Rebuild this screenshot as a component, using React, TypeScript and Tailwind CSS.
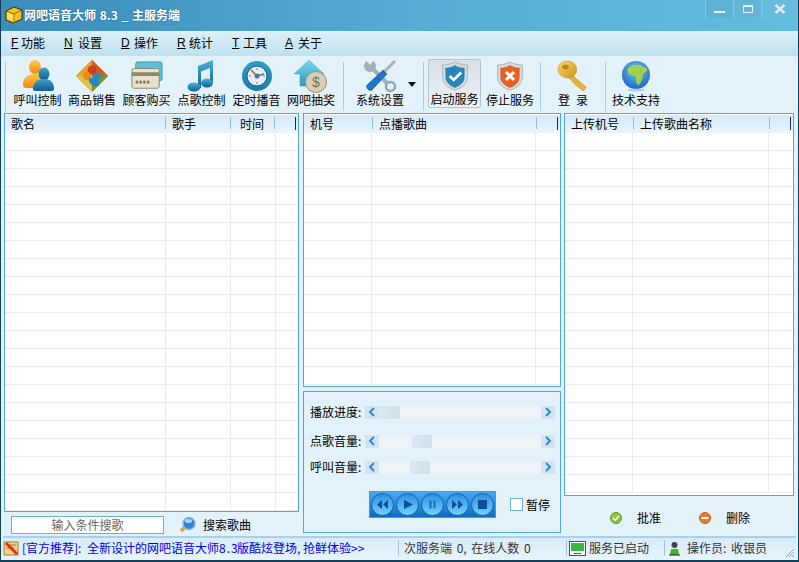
import React from "react";

const Ico = ({ children, className = "w-[34px] h-[34px]" }: { children: React.ReactNode; className?: string }) => (
  <svg viewBox="0 0 34 34" className={className}>{children}</svg>
);

const Users = () => (
  <Ico>
    <defs>
      <linearGradient id="uo" x1="0" y1="0" x2="0" y2="1"><stop offset="0" stopColor="#ffc94d" /><stop offset="1" stopColor="#ee8a10" /></linearGradient>
      <linearGradient id="ub" x1="0" y1="0" x2="0" y2="1"><stop offset="0" stopColor="#3aa0d0" /><stop offset="1" stopColor="#115f8f" /></linearGradient>
    </defs>
    <ellipse cx="14" cy="8" rx="6" ry="7" fill="url(#uo)" />
    <path d="M2 26c0-7 4-11 12-11 5 0 8 2 9 5l-4 9H6c-3 0-4-1-4-3z" fill="url(#uo)" />
    <ellipse cx="23" cy="15" rx="5.500" ry="6.500" fill="url(#ub)" />
    <path d="M12 30c0-6 4-10 11-10s10 4 10 10c0 1-1 2-2 2H14c-1 0-2-1-2-2z" fill="url(#ub)" />
  </Ico>
);
const Puzzle = () => (
  <Ico>
    <path d="M17 1L33 17 17 33 1 17z" fill="#7fa040" />
    <path d="M17 1L17 17 1 17z" fill="#f0a020" />
    <path d="M17 1L33 17 17 17z" fill="#d85a20" />
    <path d="M17 17H33L17 33z" fill="#6f9a3c" />
    <path d="M1 17H17V33z" fill="#e8c040" />
    <circle cx="17" cy="11" r="4.500" fill="#c8401c" />
    <circle cx="12" cy="17" r="4" fill="#e88a18" />
    <path d="M14 19h10v8h-6l-4-4z" fill="#2a86c0" />
    <circle cx="22" cy="17" r="3.500" fill="#2a86c0" />
  </Ico>
);
const Card = () => (
  <Ico className="w-[32px] h-[32px]">
    <rect x="5" y="2" width="28" height="20" rx="2" fill="#5cc0d8" stroke="#3a9cb8" />
    <rect x="1" y="9" width="29" height="21" rx="2" fill="#e6e0cc" stroke="#8a8470" />
    <rect x="1" y="13" width="29" height="4" fill="#8e8a70" />
    <rect x="5" y="22" width="2.500" height="3" fill="#77735e" />
    <rect x="9" y="22" width="2.500" height="3" fill="#77735e" />
    <rect x="13" y="22" width="2.500" height="3" fill="#77735e" />
    <rect x="17" y="22" width="2.500" height="3" fill="#77735e" />
  </Ico>
);
const Music = () => (
  <Ico>
    <defs><linearGradient id="mu" x1="0" y1="0" x2="0" y2="1"><stop offset="0" stopColor="#4ab4dc" /><stop offset="1" stopColor="#0f5f88" /></linearGradient></defs>
    <path d="M13 7L28 1V24h-3V9L16 12.500V29h-3z" fill="url(#mu)" />
    <ellipse cx="9" cy="28" rx="6.500" ry="4.500" fill="url(#mu)" />
    <ellipse cx="22" cy="24" rx="6" ry="4.500" fill="url(#mu)" />
  </Ico>
);
const Clock = () => (
  <Ico>
    <defs><linearGradient id="cl" x1="0" y1="0" x2="0" y2="1"><stop offset="0" stopColor="#2f9fcb" /><stop offset="1" stopColor="#1a7aa8" /></linearGradient></defs>
    <circle cx="17" cy="17" r="15" fill="url(#cl)" />
    <circle cx="17" cy="17" r="10" fill="#e6edf0" stroke="#125f88" />
    <path d="M17 9v2M17 23v2M9 17h2M23 17h2" stroke="#6d8a9c" />
    <path d="M17 17L11 11" stroke="#d05020" strokeWidth="1.500" />
    <path d="M17 17L24 15" stroke="#4a7a98" strokeWidth="1.500" />
    <circle cx="17" cy="17" r="2.500" fill="#4a7a98" />
  </Ico>
);
const HomeCoin = () => (
  <Ico>
    <defs><linearGradient id="hc" x1="0" y1="0" x2="0" y2="1"><stop offset="0" stopColor="#7cd8ec" /><stop offset="1" stopColor="#2a9cc4" /></linearGradient></defs>
    <path d="M15 1L30 15H25V27H6V15H0z" fill="url(#hc)" stroke="#3b9fc4" strokeWidth="0.500" />
    <circle cx="22" cy="23" r="10.500" fill="#d8d0b4" stroke="#9a9276" />
    <text x="22" y="28" textAnchor="middle" fontSize="14" fill="#7a7258" fontFamily="Liberation Sans">$</text>
  </Ico>
);
const Tools = () => (
  <Ico>
    <circle cx="7" cy="7" r="6" fill="#a4afb7" />
    <path d="M2 0l5 6 5-6z" fill="#e3f1f9" />
    <path d="M9 9L26 26" stroke="#a4afb7" strokeWidth="4" />
    <circle cx="27.500" cy="27.500" r="4.500" fill="#e3f1f9" stroke="#9aa4ac" strokeWidth="2.500" />
    <path d="M32 2L20 14" stroke="#a8b2ba" strokeWidth="3" />
    <path d="M20 11l4 4L9 31c-2 2-7-2-5-5z" fill="#1f74c8" stroke="#14528f" strokeWidth="0.500" />
  </Ico>
);
const Shield = ({ color, dark, x }: { color: string; dark: string; x?: boolean }) => (
  <Ico className="w-[30px] h-[32px]">
    <path d="M17 1c4 2.500 9 3.500 14 3.500V18c0 8-7 13-14 15C10 31 3 26 3 18V4.500C8 4.500 13 3.500 17 1z" fill="#d8dcdc" stroke="#a6adb0" />
    <path d="M17 5c3 2 7 3 10.500 3v10c0 6-5 10-10.500 12C11.500 28 6.500 24 6.500 18V8C10 8 14 7 17 5z" fill={color} stroke={dark} strokeWidth="0.500" />
    {x ? (
      <path d="M12.500 12.500L21.500 21.500M21.500 12.500L12.500 21.500" stroke="#fff" strokeWidth="3.500" />
    ) : (
      <path d="M11 17l4.500 4.500L24 13" stroke="#fff" strokeWidth="3" fill="none" />
    )}
  </Ico>
);
const Key = () => (
  <Ico className="w-[32px] h-[32px]">
    <defs><linearGradient id="ky" x1="0" y1="0" x2="1" y2="1"><stop offset="0" stopColor="#fbd868" /><stop offset="1" stopColor="#d09418" /></linearGradient></defs>
    <path d="M15 15L31 29 28 33 24 30 22 28 20 27 12 18z" fill="#e8b438" stroke="#b88420" strokeWidth="0.500" />
    <ellipse cx="11" cy="10" rx="10" ry="9" fill="url(#ky)" stroke="#b88420" strokeWidth="0.500" />
    <ellipse cx="9" cy="7.500" rx="3.500" ry="2.500" fill="#b88420" />
  </Ico>
);
const Globe = () => (
  <Ico>
    <defs><radialGradient id="gl" cx="0.500" cy="0.350" r="0.700"><stop offset="0" stopColor="#6cc4f4" /><stop offset="1" stopColor="#1a62c0" /></radialGradient></defs>
    <circle cx="17" cy="16" r="14" fill="url(#gl)" />
    <path d="M9 9c3-3 8-4 12-3l3 2c3 0 5 2 4 4l-4 3-1 6-3 5c-2 0-3-3-3-6l-1-3c-3 0-6-1-7-3 0-2-1-4 0-5z" fill="#a4d050" />
    <ellipse cx="17" cy="31" rx="9" ry="1.500" fill="#9cb8c8" opacity="0.600" />
  </Ico>
);

const Sep = ({ className = "" }: { className?: string }) => <div className={`w-px h-[49px] bg-[#a9cde3] ${className}`} />;

const Tool = ({ label, children, className = "w-[54px]" }: { label: string; children: React.ReactNode; className?: string }) => (
  <div className={`flex flex-col items-center shrink-0 ${className}`}>
    <div className="h-[34px] flex items-center justify-center">{children}</div>
    <div className="text-[12px] leading-[16px] -mt-[1px] whitespace-nowrap text-black">{label}</div>
  </div>
);

const Menu = ({ k, label, className, keyW }: { k: string; label: string; className: string; keyW: string }) => (
  <div className={`text-[12px] leading-[16px] text-black flex shrink-0 ${className}`}>
    <span className={`underline font-['Liberation_Sans'] ${keyW}`}>{k}</span>
    <span>{label}</span>
  </div>
);

const HeaderCell = ({ label, className, pad = "pl-[6px]" }: { label: string; className: string; pad?: string }) => (
  <div className={`h-full flex items-center shrink-0 relative ${pad} ${className}`}>
    <span className="text-[12px] whitespace-nowrap text-black">{label}</span>
    <span className="absolute right-0 top-[2px] h-[12px] w-px bg-[#8fc0e0]" />
  </div>
);

const rowIndexes = (n: number) => Array.from({ length: n }, (_, i) => i);

function Table({ headers, cols, rows, className }: { headers: { label: string; cls: string; pad?: string }[]; cols: string[]; rows: number; className: string }) {
  return (
    <div className={`border border-[#4fa9de] bg-white overflow-hidden flex flex-col ${className}`}>
      <div className="h-[18px] mt-[1px] shrink-0 flex bg-gradient-to-b from-[#d5e9f9] to-[#ebf5fc] relative">
        {headers.map((h) => (
          <HeaderCell key={h.label} label={h.label} className={h.cls} pad={h.pad} />
        ))}
        <span className="absolute right-[2px] top-[2px] h-[13px] w-px bg-[#1c2a44]" />
      </div>
      <div className="flex-1 overflow-hidden">
        {rowIndexes(rows).map((r) => (
          <div key={r} className="flex h-[18px] border-b border-[#ececec]">
            {cols.map((c, i) => (
              <div key={i} className={`h-full shrink-0 border-r border-[#ececec] ${c}`} />
            ))}
          </div>
        ))}
      </div>
    </div>
  );
}

const ScrollRow = ({ label, thumb, className }: { label: string; thumb: string; className: string }) => (
  <div className={`flex items-center h-[14px] ${className}`}>
    <span className="w-[55px] shrink-0 text-[12px] whitespace-nowrap text-black">{label}</span>
    <div className="w-[190px] h-[13px] flex bg-[#edf3f7]">
      <div className="w-[14px] h-full bg-[#d4e4ef] flex items-center justify-center">
        <svg width="8" height="10" viewBox="0 0 8 10"><path d="M6 1L2 5l4 4" fill="none" stroke="#2f86d8" strokeWidth="2" /></svg>
      </div>
      <div className={`h-full bg-gradient-to-r from-[#dae8f1] to-[#cfe0ec] ${thumb}`} />
      <div className="flex-1" />
      <div className="w-[14px] h-full bg-[#d4e4ef] flex items-center justify-center">
        <svg width="8" height="10" viewBox="0 0 8 10"><path d="M2 1l4 4-4 4" fill="none" stroke="#2f86d8" strokeWidth="2" /></svg>
      </div>
    </div>
  </div>
);

const RoundBtn = ({ children }: { children: React.ReactNode }) => (
  <div className="w-[23px] h-[23px] rounded-full shrink-0 bg-gradient-to-b from-[#2a90e0] to-[#74d0fc] border border-[#1265b0] flex items-center justify-center">
    <svg width="13" height="11" viewBox="0 0 13 11" fill="#0a4f98">{children}</svg>
  </div>
);

export default function App() {
  return (
    <div className="w-[799px] h-[562px] flex flex-col overflow-hidden bg-[#e3f1f9] font-['Noto_Sans_CJK_SC','Liberation_Sans',sans-serif] border-l border-r border-b-2 border-[#14405c]">
      <div className="h-[31px] shrink-0 flex items-center bg-gradient-to-r from-[#3a8cba] via-[#55abd3] to-[#64bddf] relative pl-[4px] pb-[1px]">
        <svg width="18" height="18" viewBox="0 0 18 18" className="shrink-0">
          <path d="M9 1L17 4V13L8 17 1 14V5z" fill="#f7c21a" stroke="#3a2a10" />
          <path d="M1 5L9 8 17 4" fill="none" stroke="#3a2a10" strokeWidth="0.600" />
          <path d="M9 8V17" stroke="#b07a10" />
          <path d="M2 6L8 8.500V15L2 13z" fill="#fde24c" />
        </svg>
        <span className="ml-[1px] text-[12px] font-bold text-white whitespace-nowrap [word-spacing:1px] [text-shadow:0_0_2px_#1a5a80]">网吧语音大师 8.3 _ 主服务端</span>
        <div className="absolute right-0 top-0 h-[18px] flex">
          <div className="w-[28px] h-full border-l border-[#8ac4dc] bg-[#5fb2d4] flex items-center justify-center pt-[6px]"><div className="w-[11px] h-[2px] bg-[#e8f2f8]" /></div>
          <div className="w-[28px] h-full border-l border-[#8ac4dc] bg-[#63b6d8] flex items-center justify-center"><div className="w-[10px] h-[8px] border border-t-2 border-[#e8f2f8]" /></div>
          <div className="w-[37px] h-full border-l border-[#8ac4dc] bg-[#6abcdc] flex items-center justify-center">
            <svg width="12" height="10" viewBox="0 0 12 10"><path d="M1.500 1L10.500 9M10.500 1L1.500 9" stroke="#dfeaf0" strokeWidth="2.400" /></svg>
          </div>
        </div>
      </div>

      <div className="h-[25px] shrink-0 flex items-center pl-[10px] pb-[2px] bg-gradient-to-b from-[#ddf0f8] to-[#bfe1f0]">
        <Menu k="F" label="功能" className="w-[53px]" keyW="w-[10px]" />
        <Menu k="N" label="设置" className="w-[57px]" keyW="w-[14px]" />
        <Menu k="D" label="操作" className="w-[56px]" keyW="w-[13px]" />
        <Menu k="R" label="统计" className="w-[55px]" keyW="w-[12px]" />
        <Menu k="T" label="工具" className="w-[53px]" keyW="w-[11px]" />
        <Menu k="A" label="关于" className="w-[50px]" keyW="w-[13px]" />
      </div>

      <div className="h-[57px] shrink-0 flex items-start pt-[3px] pl-[4px]">
        <Sep className="mr-[4px] mt-[3px]" />
        <Tool label="呼叫控制" className="w-[55px]"><Users /></Tool>
        <Tool label="商品销售"><Puzzle /></Tool>
        <Tool label="顾客购买" className="w-[55px]"><Card /></Tool>
        <Tool label="点歌控制" className="w-[55px]"><Music /></Tool>
        <Tool label="定时播音" className="w-[55px]"><Clock /></Tool>
        <Tool label="网吧抽奖"><HomeCoin /></Tool>
        <Sep className="ml-[5px] mt-[3px]" />
        <Tool label="系统设置" className="w-[54px] ml-[9px]"><Tools /></Tool>
        <svg width="8" height="5" viewBox="0 0 8 5" className="ml-[1px] mt-[23px] shrink-0"><path d="M0 0h8L4 5z" fill="#111" /></svg>
        <Sep className="ml-[7px] mt-[3px]" />
        <div className="ml-[4px] w-[53px] h-[49px] shrink-0 rounded-[2px] border border-[#b6c4cc] bg-gradient-to-b from-[#d5e0e6] to-[#ecf2f5] flex justify-center">
          <Tool label="启动服务" className="w-[50px]"><Shield color="#2487b6" dark="#156890" /></Tool>
        </div>
        <Tool label="停止服务" className="w-[54px] ml-[2px]"><Shield color="#e5621f" dark="#b8400f" x /></Tool>
        <Sep className="ml-[3px] mt-[3px]" />
        <Tool label={"登\u2002录"} className="w-[54px] ml-[5px]"><Key /></Tool>
        <Sep className="ml-[5px] mt-[3px]" />
        <Tool label="技术支持" className="w-[54px] ml-[3px]"><Globe /></Tool>
      </div>

      <div className="flex-1 flex min-h-0 pl-[3px]">
        <div className="w-[295px] shrink-0 flex flex-col">
          <Table
            className="h-[399px] shrink-0"
            headers={[
              { label: "歌名", cls: "w-[161px]" },
              { label: "歌手", cls: "w-[65px]" },
              { label: "时间", cls: "w-[44px]", pad: "pl-[9px]" },
            ]}
            cols={["w-[161px]", "w-[65px]", "w-[45px]"]}
            rows={21}
          />
          <div className="flex items-center mt-[4px] pl-[7px]">
            <div className="w-[153px] h-[18px] border border-[#6faed6] bg-white text-center text-[12px] leading-[15px] text-[#666]">输入条件搜歌</div>
            <svg width="18" height="18" viewBox="0 0 18 18" className="ml-[15px] shrink-0">
              <path d="M6 11L2 15" stroke="#e8a020" strokeWidth="3.500" />
              <circle cx="10" cy="7.500" r="6" fill="#2b86e0" stroke="#8fb4d0" strokeWidth="1.500" />
              <ellipse cx="9.500" cy="5" rx="3.500" ry="2" fill="#a8d8f8" />
            </svg>
            <span className="ml-[6px] text-[12px] text-black whitespace-nowrap">搜索歌曲</span>
          </div>
        </div>

        <div className="w-[258px] ml-[4px] shrink-0 flex flex-col">
          <Table
            className="h-[274px] shrink-0"
            headers={[
              { label: "机号", cls: "w-[69px]" },
              { label: "点播歌曲", cls: "w-[164px]" },
            ]}
            cols={["w-[68px]", "w-[164px]"]}
            rows={14}
          />
          <div className="h-[142px] mt-[4px] border border-[#4fa9de] pl-[6px] pt-[13px]">
            <ScrollRow label="播放进度:" thumb="w-[21px]" className="" />
            <ScrollRow label="点歌音量:" thumb="w-[20px] ml-[33px]" className="mt-[15px]" />
            <ScrollRow label="呼叫音量:" thumb="w-[20px] ml-[31px]" className="mt-[12px]" />
            <div className="flex items-center mt-[17px] ml-[59px]">
              <div className="w-[127px] h-[27px] flex items-center justify-center gap-[2px] bg-gradient-to-b from-[#46aaf0] to-[#0b6cc0] border border-[#3f9ce0]">
                <RoundBtn><path d="M6 1v9L1 5.500zM12 1v9L7 5.500z" /></RoundBtn>
                <RoundBtn><path d="M3 1l9 4.500L3 10z" /></RoundBtn>
                <RoundBtn><path d="M3.500 1.500h2v8h-2zM7.500 1.500h2v8h-2z" fill="#1b6cb4" /></RoundBtn>
                <RoundBtn><path d="M1 1l5 4.500L1 10zM7 1l5 4.500L7 10z" /></RoundBtn>
                <RoundBtn><rect x="2" y="1" width="9" height="9" /></RoundBtn>
              </div>
              <div className="w-[13px] h-[13px] ml-[14px] shrink-0 bg-white border border-[#6faed6]" />
              <span className="ml-[3px] text-[12px] text-black whitespace-nowrap">暂停</span>
            </div>
          </div>
        </div>

        <div className="w-[230px] ml-[3px] shrink-0 flex flex-col">
          <Table
            className="h-[383px] shrink-0"
            headers={[
              { label: "上传机号", cls: "w-[69px]" },
              { label: "上传歌曲名称", cls: "w-[136px]" },
            ]}
            cols={["w-[68px]", "w-[136px]"]}
            rows={20}
          />
          <div className="flex items-center pl-[46px] mt-[13px]">
            <svg width="12" height="12" viewBox="0 0 12 12" className="shrink-0">
              <circle cx="6" cy="6" r="5.500" fill="#8cc63f" stroke="#5f9a20" />
              <path d="M3 6l2.200 2.200L9 4" stroke="#fff" strokeWidth="1.400" fill="none" />
            </svg>
            <span className="ml-[15px] text-[12px] text-black whitespace-nowrap">批准</span>
            <svg width="12" height="12" viewBox="0 0 12 12" className="ml-[38px] shrink-0">
              <circle cx="6" cy="6" r="5.500" fill="#f07a28" stroke="#d05a10" />
              <rect x="2.500" y="5" width="7" height="2" fill="#fff" />
            </svg>
            <span className="ml-[15px] text-[12px] text-black whitespace-nowrap">删除</span>
          </div>
        </div>
      </div>

      <div className="h-[24px] shrink-0 mx-[2px] flex items-center pb-[2px] border-t-2 border-[#a9d0f0] bg-gradient-to-b from-[#d8ebf9] to-[#e8f4fb] relative">
        <svg width="18" height="16" viewBox="0 0 18 16" className="shrink-0">
          <rect x="1" y="2" width="14" height="13" fill="#f3d28a" stroke="#a87a30" />
          <path d="M3 5h10M3 8h8" stroke="#a87a30" />
          <path d="M4 2l11 11-2 2L2 4z" fill="#d8301c" />
        </svg>
        <span className="ml-[1px] w-[376px] shrink-0 text-[12px] text-[#0000e6] whitespace-nowrap">
          <span className="inline-block w-[65px]">[官方推荐]:</span>全新设计的网吧语音大师<span className="inline-block w-[18px] tracking-[1px]">8.3</span>版酷炫登场, 抢鲜体验&gt;&gt;
        </span>
        <div className="w-px h-[16px] bg-[#9cc4dc] shrink-0" />
        <span className="ml-[5px] w-[162px] shrink-0 text-[12px] text-[#333] whitespace-nowrap [word-spacing:2px]">次服务端 0, 在线人数 0</span>
        <div className="w-px h-[16px] bg-[#9cc4dc] shrink-0" />
        <svg width="17" height="15" viewBox="0 0 17 15" className="ml-[2px] shrink-0">
          <rect x="0.500" y="0.500" width="16" height="14" fill="#fff" stroke="#1a7a1a" />
          <rect x="2" y="2" width="13" height="8" fill="#3cb83c" />
          <rect x="5" y="12" width="7" height="1" fill="#1a7a1a" />
        </svg>
        <span className="ml-[3px] w-[75px] shrink-0 text-[12px] text-[#333] whitespace-nowrap">服务已启动</span>
        <div className="w-px h-[16px] bg-[#9cc4dc] shrink-0" />
        <svg width="13" height="15" viewBox="0 0 13 15" className="ml-[3px] shrink-0">
          <circle cx="6.500" cy="4" r="3" fill="#444" />
          <path d="M3 8h7l1 6H2z" fill="#4cae1c" />
          <path d="M1 14h11" stroke="#222" />
        </svg>
        <span className="ml-[6px] text-[12px] text-[#333] whitespace-nowrap [word-spacing:2px]">操作员: 收银员</span>
        <svg width="10" height="10" viewBox="0 0 10 10" className="absolute right-[1px] bottom-[2px]">
          <path d="M9 1L1 9M9 4L4 9M9 7L7 9" stroke="#8aa4b4" />
        </svg>
      </div>
    </div>
  );
}
